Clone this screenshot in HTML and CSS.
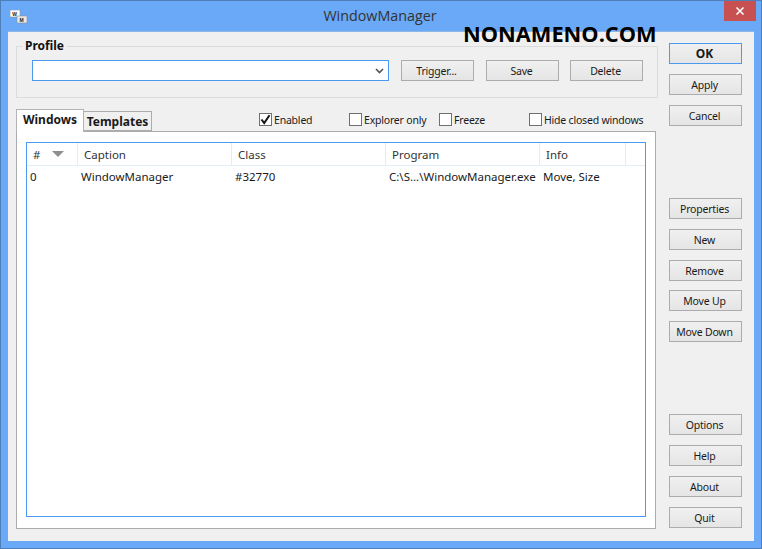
FILE: index.html
```html
<!DOCTYPE html>
<html lang="en">
<head>
<meta charset="utf-8">
<title>WindowManager</title>
<link rel="stylesheet" href="styles.css">
</head>
<body>
<div class="window">
  <header class="titlebar">
    <svg class="app-icon" width="18" height="14" viewBox="0 0 18 14">
      <rect x="0" y="0" width="10" height="7" fill="#fff" stroke="#8a9099" stroke-width="0.6"/>
      <rect x="7" y="6" width="10" height="7" fill="#e8e8e8" stroke="#8a9099" stroke-width="0.6"/>
      <text x="2.2" y="5.6" class="icon-letter">W</text>
      <text x="9.4" y="11.6" class="icon-letter">M</text>
    </svg>
    <div class="title">WindowManager</div>
    <div class="close"><svg width="10" height="10" viewBox="0 0 10 10"><path d="M1.5 1.5 8.5 8.5M8.5 1.5 1.5 8.5" stroke="#fff" stroke-width="1.6" fill="none"/></svg></div>
  </header>
  <div class="watermark">NONAMENO.COM</div>
  <main class="client">
    <div class="left">
      <fieldset class="profile">
        <legend class="legend">Profile</legend>
        <div class="profile-row">
          <div class="combo"><svg width="9" height="6" viewBox="0 0 9 6"><path d="M1 1 4.5 4.5 8 1" stroke="#555" stroke-width="1.7" fill="none"/></svg></div>
          <button class="btn btn-trigger">Trigger...</button>
          <button class="btn btn-save">Save</button>
          <button class="btn btn-delete">Delete</button>
        </div>
      </fieldset>
      <div class="tabline">
        <div class="tabs">
          <div class="tab active">Windows</div>
          <div class="tab">Templates</div>
        </div>
        <div class="checks">
          <label class="check"><span class="box"><svg width="13" height="13" viewBox="0 0 13 13"><path d="M2.5 6.5 5.2 10 10.5 2.2" stroke="#111" stroke-width="2" fill="none"/></svg></span>Enabled</label>
          <label class="check"><span class="box"></span>Explorer only</label>
          <label class="check"><span class="box"></span>Freeze</label>
          <label class="check"><span class="box"></span>Hide closed windows</label>
        </div>
      </div>
      <section class="panel">
        <div class="list">
          <div class="list-head">
            <div class="hcell hcell-sort">#<span class="sort"></span></div>
            <div class="hcell">Caption</div>
            <div class="hcell">Class</div>
            <div class="hcell">Program</div>
            <div class="hcell">Info</div>
            <div class="hcell hcell-last"></div>
          </div>
          <div class="list-row">
            <div class="cell">0</div>
            <div class="cell">WindowManager</div>
            <div class="cell">#32770</div>
            <div class="cell">C:\S...\WindowManager.exe</div>
            <div class="cell">Move, Size</div>
          </div>
        </div>
      </section>
    </div>
    <aside class="right">
      <div class="group group-a">
        <button class="btn btn-ok">OK</button>
        <button class="btn">Apply</button>
        <button class="btn">Cancel</button>
      </div>
      <div class="group group-b">
        <button class="btn">Properties</button>
        <button class="btn">New</button>
        <button class="btn">Remove</button>
        <button class="btn btn-tight">Move Up</button>
        <button class="btn">Move Down</button>
      </div>
      <div class="group group-c">
        <button class="btn">Options</button>
        <button class="btn">Help</button>
        <button class="btn">About</button>
        <button class="btn">Quit</button>
      </div>
    </aside>
  </main>
</div>
</body>
</html>
```
FILE: styles.css
```css
* { box-sizing: border-box; }
html, body { margin: 0; padding: 0; }
body {
  width: 762px;
  height: 549px;
  overflow: hidden;
  font-family: "Noto Sans", sans-serif;
  font-size: 11px;
  color: #1a1a1a;
}
.window {
  position: relative;
  width: 762px;
  height: 549px;
  background: #69a9f7;
  border: 1px solid #4f7fb8;
  padding: 0 7px 7px;
  display: flex;
  flex-direction: column;
}
.titlebar {
  height: 30px;
  display: flex;
  position: relative;
  flex: none;
}
.app-icon { position: absolute; left: 2px; top: 9px; }
.icon-letter { font-family: "Liberation Sans", sans-serif; font-size: 5px; font-weight: 700; fill: #222; }
.title {
  flex: 1;
  text-align: center;
  font-family: "Open Sans", sans-serif;
  font-size: 14.3px;
  line-height: 29px;
  color: #333;
  padding-right: 2px;
}
.close {
  position: absolute;
  right: -2px;
  top: 0;
  width: 32px;
  height: 20px;
  background: #c75050;
  display: flex;
  align-items: center;
  justify-content: center;
}
.watermark {
  position: absolute;
  left: 462px;
  top: 18px;
  font-family: "Open Sans", sans-serif;
  font-weight: 700;
  font-size: 21.8px;
  line-height: 30px;
  color: #000;
  z-index: 2;
}
.client {
  flex: 1;
  background: #f0f0f0;
  border-top: 1px solid #8fb7e6;
  display: flex;
  padding: 0 12px 0 8px;
  min-height: 0;
}
.left { width: 642px; display: flex; flex-direction: column; }
.profile {
  margin: 6px 0 0;
  padding: 0 0 15px 15px;
  height: 60px;
  border: 1px solid #dcdcdc;
  min-inline-size: 0;
}
.legend {
  margin-left: -10px;
  padding: 0 3px 2px;
  font-weight: 700;
  font-size: 12px;
  line-height: 15px;
  color: #111;
}
.profile-row { display: flex; margin-top: 5px; }
.combo {
  width: 357px;
  height: 21px;
  background: #fff;
  border: 1px solid #4a9bf0;
  display: flex;
  align-items: center;
  justify-content: flex-end;
  padding-right: 4px;
}
.btn {
  width: 73px;
  height: 21px;
  padding: 0 2px 0 0;
  border: 1px solid #acacac;
  background: linear-gradient(#f0f0f0, #e5e5e5);
  font-family: "Noto Sans", sans-serif;
  font-size: 10.5px;
  letter-spacing: -0.2px;
  color: #1a1a1a;
  display: block;
}
.btn-trigger { margin-left: 12px; }
.btn-save { margin-left: 12px; }
.btn-delete { margin-left: 11px; }
.tabline { display: flex; height: 22px; margin-top: 11px; position: relative; z-index: 1; }
.tabs { display: flex; align-items: flex-end; width: 243px; }
.tab {
  width: 68px;
  height: 20px;
  border: 1px solid #acacac;
  border-left: 0;
  background: #f0f0f0;
  font-weight: 700;
  font-size: 12px;
  line-height: 20px;
  text-align: center;
  color: #1a1a1a;
}
.tab.active {
  height: 23px;
  margin-bottom: -1px;
  border: 1px solid #b4b4b4;
  border-bottom: 0;
  background: #fff;
  line-height: 20px;
}
.checks { display: grid; grid-template-columns: repeat(4, 90px); align-items: center; height: 21px; }
.check { display: flex; align-items: center; gap: 2px; white-space: nowrap; font-size: 10.5px; letter-spacing: -0.2px; }
.box {
  width: 13px;
  height: 13px;
  flex: none;
  background: #fff;
  border: 1px solid #707070;
  display: block;
  position: relative;
}
.box svg { position: absolute; left: -1px; top: -1px; }
.panel {
  width: 640px;
  height: 398px;
  background: #fff;
  border: 1px solid #acacac;
  padding: 10px 9px 11px;
}
.list { height: 100%; border: 1px solid #4a9bf0; background: #fff; }
.list-head, .list-row { display: grid; grid-template-columns: 51px 154px 154px 154px 86px 1fr; }
.list-head { height: 23px; border-bottom: 1px solid #e3edf8; }
.hcell {
  border-right: 1px solid #e3edf8;
  padding-left: 6px;
  line-height: 23px;
  font-size: 11.5px;
  color: #333;
  position: relative;
}
.hcell-last { border-right: 0; }
.sort {
  position: absolute;
  left: 25px;
  top: 8px;
  border-style: solid;
  border-width: 6px 6.5px 0;
  border-color: #8f8f8f transparent transparent;
}
.list-row { height: 22px; }
.cell { padding-left: 3px; line-height: 21px; font-size: 11.5px; white-space: nowrap; }
.right { margin-left: 11px; width: 73px; display: flex; flex-direction: column; }
.group { display: flex; flex-direction: column; gap: 10px; }
.group-a { margin-top: 11px; }
.group-b { margin-top: 72px; }
.group-b .btn-tight { margin-top: -1px; }
.group-c { margin-top: 72px; }
.btn-ok { border: 1px solid #4a9bf0; font-weight: 700; font-size: 12px; letter-spacing: 0; }
```
